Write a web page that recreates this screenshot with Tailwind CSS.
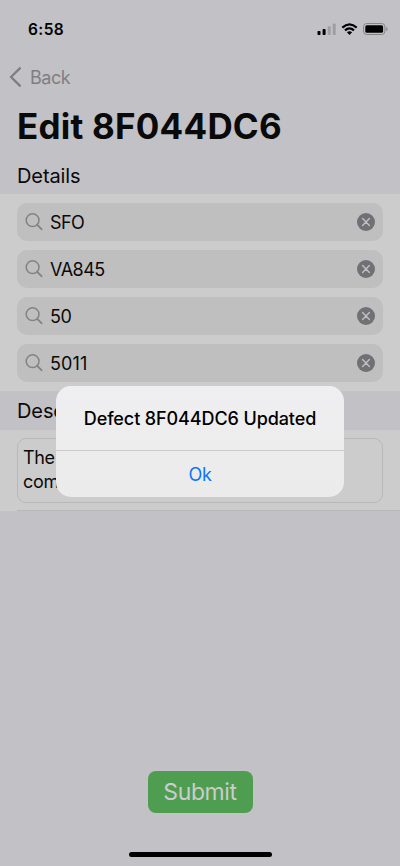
<!DOCTYPE html>
<html lang="en">
<head>
<meta charset="utf-8">
<meta name="viewport" content="width=device-width, initial-scale=1">
<title>Edit 8F044DC6</title>
<script src="https://cdn.jsdelivr.net/npm/@tailwindcss/browser@4"></script>
</head>
<body class="bg-[#c2c1c6]">
<svg class="hidden">
  <symbol id="search" viewBox="0 0 18 18"><g fill="none" stroke="#838385" stroke-width="1.5" stroke-linecap="round"><circle cx="7.6" cy="7.2" r="6.4"/><path d="M12.2 11.8 16.5 16.2" stroke-width="1.9"/></g></symbol>
  <symbol id="clear" viewBox="0 0 18 18"><circle cx="9" cy="9" r="9" fill="#717175"/><path d="M5.6 5.6 12.4 12.4M12.4 5.6 5.6 12.4" stroke="#c0c0c0" stroke-width="1.4" stroke-linecap="round"/></symbol>
</svg>
<div class="relative flex flex-col w-[400px] h-[866px] overflow-hidden bg-[#c2c1c6] font-['Inter',sans-serif] text-[#0a0a0a]">
  <header class="flex h-[58px] shrink-0 items-center justify-between pl-[28px] pr-[12px]">
    <span class="pt-px text-[15.5px] font-semibold leading-none tracking-[0.4px] text-black">6:58</span>
    <div class="flex items-center gap-[5px]">
      <svg class="h-3 w-[19px]" viewBox="0 0 19 12"><rect x="0.5" y="8" width="3" height="4" rx=".8"/><rect x="5.6" y="6" width="3" height="6" rx=".8"/><g fill="#9f9fa3"><rect x="10.7" y="3.2" width="3" height="8.8" rx=".8"/><rect x="15.7" y="0.5" width="3" height="11.5" rx=".8"/></g></svg>
      <svg class="h-3 w-[17px]" viewBox="0 0 17 12"><g fill="none" stroke="#000" stroke-width="2.2"><path d="M1.3 4.6Q8.5-2 15.7 4.6"/><path d="M4 7.4Q8.5 3.2 13 7.4"/></g><path d="M8.5 12 5.9 9.3Q8.5 7.2 11.1 9.3Z"/></svg>
      <svg class="h-3 w-[25px]" viewBox="0 0 25 12"><rect x=".5" y=".5" width="21.4" height="11" rx="3.2" fill="none" stroke="#858588"/><rect x="2.3" y="2.2" width="17.8" height="7.6" rx="1.6"/><path d="M23.2 4v4Q24.6 7.4 24.6 6T23.2 4Z" fill="#858588"/></svg>
    </div>
  </header>
  <nav class="flex h-[38px] shrink-0 items-center gap-[9px] pl-[9px] text-[#7f7f82]">
    <svg class="h-5 w-3" viewBox="0 0 12 20" fill="none" stroke="currentColor" stroke-width="2.4" stroke-linecap="round" stroke-linejoin="round"><path d="M10.8 1.3 2 10l8.8 8.7"/></svg>
    <span class="pt-px text-[18px] leading-none tracking-[-0.45px]">Back</span>
  </nav>
  <h1 class="flex h-[60px] shrink-0 items-center pl-[17px] text-[35px] font-bold leading-none tracking-[0.22px]">Edit 8F044DC6</h1>
  <h2 class="flex h-[38px] shrink-0 items-center pl-[17px] pt-[2px] text-[20px] leading-none tracking-[-0.1px]">Details</h2>
  <section class="flex h-[197px] shrink-0 flex-col gap-[9px] bg-[#cccccc] px-[17px] pt-[9px] text-[18px] leading-none">
    <div class="flex h-[38px] items-center rounded-[10px] bg-[#bfbfbf] pl-2 pr-[8px]"><svg class="size-[18px]"><use href="#search"/></svg><span class="ml-[7px] flex-1 pt-[2px] tracking-[-0.6px]">SFO</span><svg class="size-[18px]"><use href="#clear"/></svg></div>
    <div class="flex h-[38px] items-center rounded-[10px] bg-[#bfbfbf] pl-2 pr-[8px]"><svg class="size-[18px]"><use href="#search"/></svg><span class="ml-[7px] flex-1 pt-[2px] tracking-[-0.5px]">VA845</span><svg class="size-[18px]"><use href="#clear"/></svg></div>
    <div class="flex h-[38px] items-center rounded-[10px] bg-[#bfbfbf] pl-2 pr-[8px]"><svg class="size-[18px]"><use href="#search"/></svg><span class="ml-[7px] flex-1 pt-[2px] tracking-[-0.5px]">50</span><svg class="size-[18px]"><use href="#clear"/></svg></div>
    <div class="flex h-[38px] items-center rounded-[10px] bg-[#bfbfbf] pl-2 pr-[8px]"><svg class="size-[18px]"><use href="#search"/></svg><span class="ml-[7px] flex-1 pt-[2px] tracking-[0.1px]">5011</span><svg class="size-[18px]"><use href="#clear"/></svg></div>
  </section>
  <h2 class="flex h-[39px] shrink-0 items-center pl-[17px] text-[20px] leading-none tracking-[-0.1px]">Desc</h2>
  <section class="flex h-[81px] shrink-0 flex-col justify-between bg-[#cccccc] pl-[17px] pt-[8px]">
    <div class="mr-[17px] h-[65px] rounded-[9px] border border-[#b8b8b9] pl-[5px] pt-[7px] text-[18px] leading-[24px] tracking-[-0.35px]">The<br>com</div>
    <div class="h-px bg-[#b8b8ba]"></div>
  </section>
  <div class="flex flex-1 flex-col items-center justify-end pb-[9px]">
    <button class="mb-[39px] flex h-[42px] w-[105px] items-center justify-center rounded-[8px] bg-[#4f9d50] pt-px text-[23px] leading-none tracking-[-0.4px] text-[#cccccc]">Submit</button>
    <div class="h-[5px] w-[143px] rounded-full bg-black"></div>
  </div>
  <div role="dialog" class="absolute left-[56px] top-[386px] flex h-[111px] w-[288px] flex-col overflow-hidden rounded-[15px] bg-gradient-to-b from-[#efeff1] to-[#ebebeb] text-center leading-none">
    <p class="flex h-[65px] items-center justify-center border-b border-[#cbcbcd] pt-px text-[18px] font-medium tracking-[-0.1px] text-black">Defect 8F044DC6 Updated</p>
    <button class="flex flex-1 items-center justify-center pt-[2px] text-[18px] tracking-[-0.3px] text-[#0a75fb]">Ok</button>
  </div>
</div>
</body>
</html>
